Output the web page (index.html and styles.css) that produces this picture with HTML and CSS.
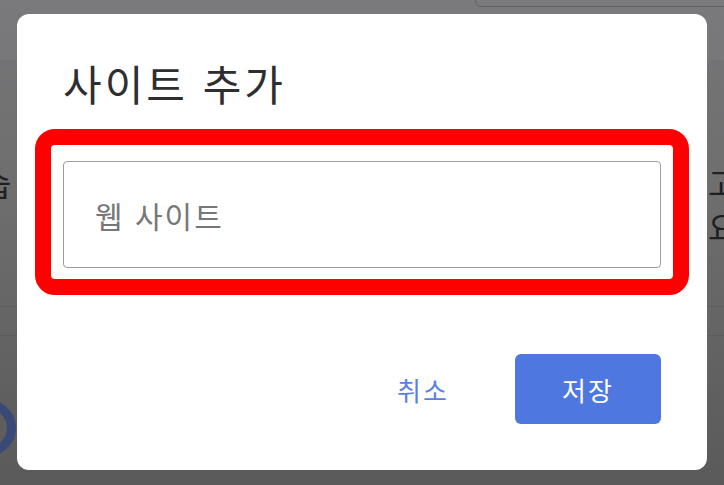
FILE: index.html
```html
<!DOCTYPE html>
<html lang="ko">
<head>
<meta charset="utf-8">
<title>사이트 추가</title>
<link rel="stylesheet" href="styles.css">
</head>
<body>
<div class="page">
  <div class="bg-band"></div>
  <div class="bg-field"></div>
  <div class="bg-text bg-left">습</div>
  <div class="bg-text bg-right">고<br>요</div>
  <div class="bg-ring"></div>
  <div class="bg-line bg-line-1"></div>
  <div class="bg-line bg-line-2"></div>

  <div class="dialog" role="dialog" aria-labelledby="dlg-title">
    <h1 class="dialog-title" id="dlg-title">사이트 추가</h1>
    <div class="highlight">
      <input class="site-input" type="text" placeholder="웹 사이트">
    </div>
    <div class="actions">
      <button class="btn btn-text" type="button">취소</button>
      <button class="btn btn-primary" type="button">저장</button>
    </div>
  </div>
</div>
</body>
</html>
```
FILE: styles.css
```css
* { box-sizing: border-box; }

html, body {
  margin: 0;
  padding: 0;
  width: 724px;
  height: 485px;
  overflow: hidden;
}

body {
  font-family: "Noto Sans CJK KR", "Noto Sans", Roboto, sans-serif;
}

.page {
  position: relative;
  width: 724px;
  height: 485px;
  background: linear-gradient(180deg, #767678 0%, #6e6e6f 40%, #606061 80%, #5a5a5a 100%);
  overflow: hidden;
}

.bg-band {
  position: absolute;
  left: 0; top: 0;
  width: 724px;
  height: 60px;
  background: rgba(255,255,255,0.03);
}

.bg-field {
  position: absolute;
  left: 475px;
  top: -20px;
  width: 270px;
  height: 27px;
  border: 1px solid #626264;
  border-radius: 6px;
}

.bg-text {
  position: absolute;
  font-size: 32px;
  line-height: 36px;
  color: #1f1f20;
}

.bg-left {
  left: -18px;
  top: 164px;
}

.bg-right {
  left: 708px;
  top: 160px;
  line-height: 44px;
}

.bg-ring {
  position: absolute;
  left: -40px;
  top: 400px;
  width: 56px;
  height: 56px;
  border: 9px solid #3a4a76;
  border-radius: 50%;
}

.bg-line {
  position: absolute;
  left: 0;
  width: 724px;
  height: 1px;
  background: rgba(0,0,0,0.08);
}
.bg-line-1 { top: 306px; }
.bg-line-2 { top: 335px; }

.dialog {
  position: absolute;
  left: 17px;
  top: 14px;
  width: 690px;
  height: 456px;
  background: #ffffff;
  border-radius: 12px;
  padding: 44px 46px 46px;
  display: flex;
  flex-direction: column;
}

.dialog-title {
  margin: 0;
  font-size: 42px;
  line-height: 50px;
  font-weight: 400;
  letter-spacing: 3px;
  color: #2e2e30;
}

.highlight {
  margin: 21px -28px 0;
  border: 16px solid #ff0000;
  border-radius: 20px;
  padding: 16px 12px 11px;
}

.site-input {
  display: block;
  width: 100%;
  height: 107px;
  border: 1px solid #9a9da0;
  border-radius: 4px;
  padding: 0 0 0 31px;
  font-family: inherit;
  font-size: 30px;
  letter-spacing: 2px;
  color: #202124;
  background: #fff;
  outline: none;
}

.site-input::placeholder {
  color: #777777;
}

.actions {
  margin-top: 59px;
  display: flex;
  justify-content: flex-end;
  align-items: center;
}

.btn {
  font-family: inherit;
  font-size: 26px;
  font-weight: 400;
  letter-spacing: 2px;
  height: 70px;
  border: none;
  border-radius: 6px;
  cursor: pointer;
  padding: 0;
}

.btn-text {
  width: 100px;
  margin-right: 42px;
  background: transparent;
  color: #5a80e0;
}

.btn-primary {
  width: 146px;
  background: #4e77df;
  color: #ffffff;
}
```
